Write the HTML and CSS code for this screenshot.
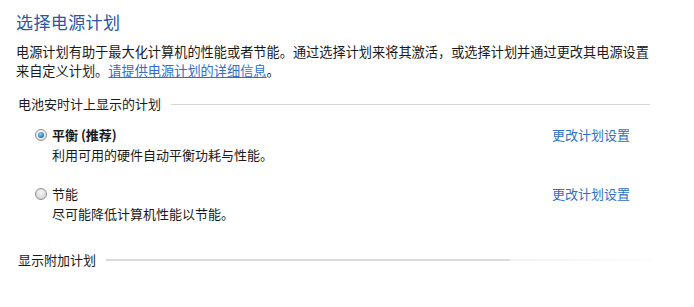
FILE: index.html
```html
<!DOCTYPE html>
<html lang="zh-CN">
<head>
<meta charset="utf-8">
<title>选择电源计划</title>
<link rel="stylesheet" href="styles.css">
</head>
<body>
<div class="page">
  <h1 class="title">选择电源计划</h1>
  <p class="intro"><span class="intro-line">电源计划有助于最大化计算机的性能或者节能。通过选择计划来将其激活，或选择计划并通过更改其电源设置</span><span class="intro-line"><span>来自定义计划。</span><a class="link underline" href="#">请提供电源计划的详细信息</a><span>。</span></span></p>

  <div class="section">
    <span class="section-label">电池安时计上显示的计划</span>
    <span class="rule"></span>
  </div>

  <div class="plans">
    <div class="plan">
      <span class="radio checked"></span>
      <span class="plan-name bold">平衡 (推荐)</span>
      <a class="link plan-link" href="#">更改计划设置</a>
      <span class="plan-desc">利用可用的硬件自动平衡功耗与性能。</span>
    </div>
    <div class="plan">
      <span class="radio"></span>
      <span class="plan-name">节能</span>
      <a class="link plan-link" href="#">更改计划设置</a>
      <span class="plan-desc">尽可能降低计算机性能以节能。</span>
    </div>
  </div>

  <div class="section section-extra">
    <span class="section-label">显示附加计划</span>
    <span class="rule rule-fade"></span>
  </div>
</div>
</body>
</html>
```

FILE: styles.css
```css
html, body {
  margin: 0;
  padding: 0;
  background: #ffffff;
}

body {
  font-family: "Noto Sans CJK SC", "Noto Sans", sans-serif;
  font-size: 13px;
  color: #1a1a1a;
}

.page {
  padding: 12px 0 0 16px;
  width: 634px;
}

.title {
  margin: 0;
  font-size: 17px;
  line-height: 20px;
  font-weight: normal;
  color: #2a56a5;
  letter-spacing: 0.4px;
}

.intro {
  margin: 10px 0 0 0;
  width: 640px;
  font-size: 13.2px;
  line-height: 19px;
}

.intro-line {
  display: block;
  white-space: nowrap;
}

.link {
  color: #2f6fc8;
  text-decoration: none;
}

.underline {
  text-decoration: underline;
}

.section {
  display: flex;
  align-items: center;
  gap: 10px;
  margin: 14px 0 0 2px;
  line-height: 20px;
}

.section-label {
  flex: none;
}

.rule {
  flex: 1;
  height: 1px;
  background: #d6d6d6;
}

.rule-fade {
  background: linear-gradient(to right, #d9d9d9 0, #d9d9d9 74%, #f3f3f3 74.5%, #fbfbfb 100%);
  height: 2px;
}

.section-extra {
  margin-top: 26px;
}

.plans {
  display: flex;
  flex-direction: column;
  gap: 19px;
  margin: 11px 0 0 19px;
}

.plan {
  display: grid;
  grid-template-columns: 12px 1fr auto;
  column-gap: 5px;
  width: 595px;
  line-height: 20px;
  align-items: center;
}

.plan-name {
  grid-column: 2;
}

.bold {
  font-weight: bold;
}

.plan-link {
  grid-column: 3;
}

.plan-desc {
  grid-column: 2 / 4;
  grid-row: 2;
}

.radio {
  grid-column: 1;
  grid-row: 1;
  width: 12px;
  height: 12px;
  box-sizing: border-box;
  border-radius: 50%;
  border: 1px solid #8f8f8f;
  background: radial-gradient(circle at 50% 35%, #f4f4f4 0, #e2e2e2 50%, #c8c8c8 100%);
  position: relative;
}

.radio.checked {
  background: radial-gradient(circle at 50% 35%, #ffffff 0, #eeeeee 50%, #d4d4d4 100%);
}

.radio.checked::after {
  content: "";
  position: absolute;
  left: 2px;
  top: 2px;
  width: 6px;
  height: 6px;
  border-radius: 50%;
  background: radial-gradient(circle at 40% 35%, #9fd3f5 0, #3a8ad0 50%, #1a4f8c 100%);
}
```
